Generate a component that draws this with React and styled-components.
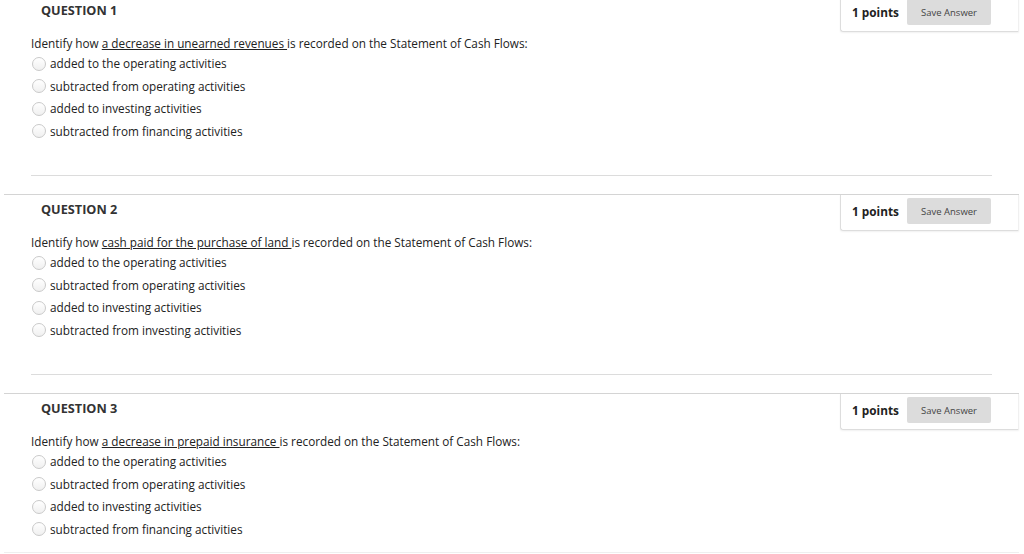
import React from 'react'
import styled, { createGlobalStyle } from 'styled-components'

const GlobalStyle = createGlobalStyle`
  html, body { margin: 0; padding: 0; background: #fff; }
  body { font-family: "Open Sans", "Noto Sans", sans-serif; color: #222; overflow: hidden; }
`

const questions = [
  {
    n: 1,
    pre: 'Identify how ',
    link: 'a decrease in unearned revenues ',
    post: ' is recorded on the Statement of Cash Flows:',
    options: ['added to the operating activities', 'subtracted from operating activities', 'added to investing activities', 'subtracted from financing activities'],
  },
  {
    n: 2,
    pre: 'Identify how ',
    link: 'cash paid for the purchase of land ',
    post: 'is recorded on the Statement of Cash Flows:',
    options: ['added to the operating activities', 'subtracted from operating activities', 'added to investing activities', 'subtracted from investing activities'],
  },
  {
    n: 3,
    pre: 'Identify how ',
    link: 'a decrease in prepaid insurance ',
    post: ' is recorded on the Statement of Cash Flows:',
    options: ['added to the operating activities', 'subtracted from operating activities', 'added to investing activities', 'subtracted from financing activities'],
  },
]

export default function App() {
  return (
    <Page>
      <GlobalStyle />
      {questions.map((q, i) => (
        <Block key={q.n} $first={i === 0}>
          <Header>
            <Title>QUESTION {q.n}</Title>
            <PointsBox>
              <Points>1 points</Points>
              <SaveButton>Save Answer</SaveButton>
            </PointsBox>
          </Header>
          <Body>
            <Prompt>
              {q.pre}
              <Underlined>{q.link}</Underlined>
              {q.post}
            </Prompt>
            <Options>
              {q.options.map((o) => (
                <Option key={o}>
                  <Radio />
                  {o}
                </Option>
              ))}
            </Options>
          </Body>
          <Divider $last={i === questions.length - 1} />
        </Block>
      ))}
    </Page>
  )
}

const Page = styled.div`
  margin-top: -5px;
`

const Block = styled.div`
  margin-left: 4px;
  width: 1015px;
  height: 199px;
  box-sizing: border-box;
  border-top: 1px solid ${(p) => (p.$first ? 'transparent' : '#d4d4d4')};
`

const Header = styled.div`
  display: flex;
  justify-content: space-between;
  align-items: flex-start;
  height: 36px;
`

const Title = styled.div`
  padding: 5px 0 0 37px;
  font-size: 12.7px;
  line-height: 18px;
  font-weight: 700;
  color: #333;
`

const PointsBox = styled.div`
  width: 179px;
  height: 36px;
  box-sizing: border-box;
  display: flex;
  align-items: center;
  padding: 0 0 3px 11px;
  border-left: 1px solid #ddd;
  border-bottom: 1px solid #ddd;
  border-right: 1px solid #f0f0f0;
  border-bottom-left-radius: 3px;
  box-shadow: 0 1px 2px rgba(0, 0, 0, 0.06);
`

const Points = styled.span`
  width: 55px;
  font-size: 11.8px;
  font-weight: 700;
  color: #222;
`

const SaveButton = styled.button`
  width: 84px;
  height: 26px;
  border: none;
  border-radius: 2px;
  background: #dcdcdc;
  font-family: "Open Sans", "Noto Sans", sans-serif;
  font-size: 9.5px;
  color: #444;
  padding: 0;
`

const Body = styled.div`
  padding-left: 27px;
  padding-top: 2px;
`

const Prompt = styled.div`
  font-size: 11.75px;
  line-height: 18px;
  color: #222;
`

const Underlined = styled.span`
  text-decoration: underline;
`

const Options = styled.div`
  display: flex;
  flex-direction: column;
`

const Option = styled.label`
  display: flex;
  align-items: center;
  height: 22.5px;
  font-size: 11.75px;
  color: #222;
`

const Radio = styled.span`
  width: 12px;
  height: 12px;
  margin: 1px 4px 0 1px;
  border-radius: 50%;
  border: 1px solid #cacaca;
  background: linear-gradient(#ffffff, #f0f0f0);
  flex-shrink: 0;
`

const Divider = styled.div`
  margin-top: ${(p) => (p.$last ? '12px' : '33px')};
  margin-left: ${(p) => (p.$last ? '0' : '27px')};
  width: ${(p) => (p.$last ? '1015px' : '961px')};
  border-top: 1px solid ${(p) => (p.$last ? '#efefef' : '#dcdcdc')};
`
